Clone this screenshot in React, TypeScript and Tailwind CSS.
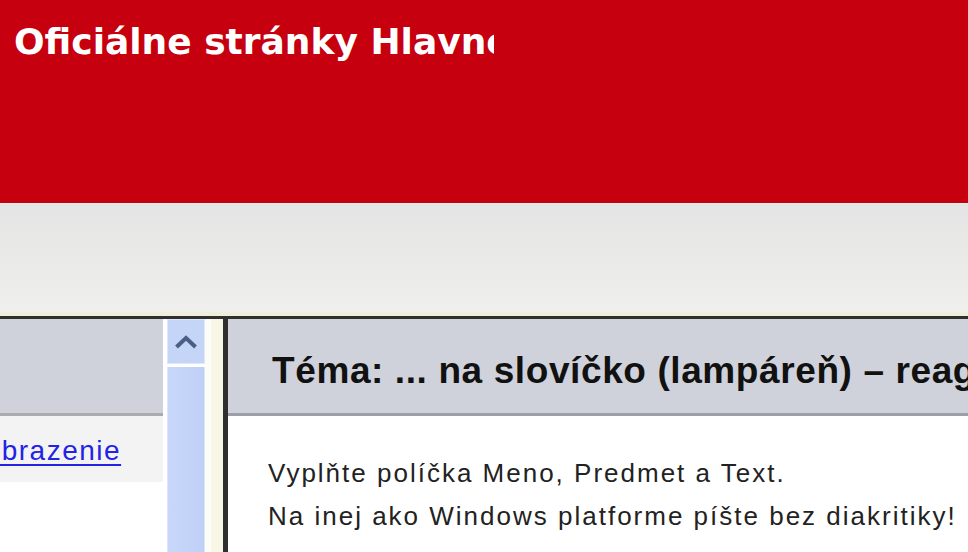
export default function App() {
  return (
    <div className="relative h-[552px] w-[968px] overflow-hidden bg-white">
      {/* red banner */}
      <div className="h-[203px] bg-[#c7000f] pl-[14px] pt-[18px]">
        <div className="w-[480px] overflow-hidden whitespace-nowrap font-['DejaVu_Sans',sans-serif] text-[36px] font-bold leading-[48px] text-white">
          Oficiálne stránky Hlavného mesta
        </div>
      </div>
      <div className="h-px bg-[#e4eeee]" />
      {/* grey toolbar strip */}
      <div className="h-[108px] bg-gradient-to-b from-[#e4e4e4] to-[#efefed]" />
      <div className="h-[4px] bg-[#f1eddb]" />
      <div className="h-[3px] bg-[#2f2f2f]" />

      <div className="flex h-[233px]">
        {/* left panel */}
        <div className="flex w-[163px] shrink-0 flex-col overflow-hidden">
          <div className="h-[97px] border-b-[3px] border-[#a9abb1] bg-[#cfd2da]" />
          <div className="flex h-[66px] items-center bg-[#f3f3f3] pt-[4px]">
            <a
              href="#"
              className="-ml-[34px] whitespace-nowrap font-['Liberation_Sans',sans-serif] text-[28px] tracking-[1.5px] text-[#2323e6] underline decoration-2 underline-offset-4"
            >
              Zobrazenie
            </a>
          </div>
          <div className="flex-1 bg-white" />
        </div>

        {/* scrollbar */}
        <div className="flex w-[60px] shrink-0 bg-white pl-[4px]">
          <div className="flex w-[38px] flex-col">
            <div className="flex h-[45px] items-center justify-center border border-[#dfe8fb] bg-[#c5d5f7]">
              <svg width="24" height="14" viewBox="0 0 24 14">
                <path d="M2.5 12 L12 3 L21.5 12" fill="none" stroke="#4a5e86" strokeWidth="4" />
              </svg>
            </div>
            <div className="h-[3px] bg-white" />
            <div className="flex-1 border-x border-[#dbe5fb] bg-gradient-to-r from-[#c8d7f9] to-[#bfd0f7]" />
          </div>
          <div className="w-[6px] bg-[#fdfdf8]" />
          <div className="flex-1 bg-[#f8f6e6]" />
        </div>
        <div className="w-[5px] shrink-0 bg-[#2f2f2f]" />

        {/* right panel */}
        <div className="flex min-w-0 flex-1 flex-col overflow-hidden">
          <div className="flex h-[97px] items-center border-b-[3px] border-[#9d9fa6] bg-[#cfd2da] pl-[44px] pt-[10px]">
            <span className="whitespace-nowrap font-['Liberation_Sans',sans-serif] text-[37px] font-bold tracking-[0.6px] text-[#111]">
              Téma: ... na slovíčko (lampáreň) – reagovať
            </span>
          </div>
          <div className="flex-1 bg-white pl-[40px] pt-[36px] font-['Liberation_Sans',sans-serif] text-[26px] leading-[43px] tracking-[2px] text-[#222]">
            <p className="whitespace-nowrap">Vyplňte políčka Meno, Predmet a Text.</p>
            <p className="whitespace-nowrap">Na inej ako Windows platforme píšte bez diakritiky!</p>
          </div>
        </div>
      </div>
    </div>
  );
}
